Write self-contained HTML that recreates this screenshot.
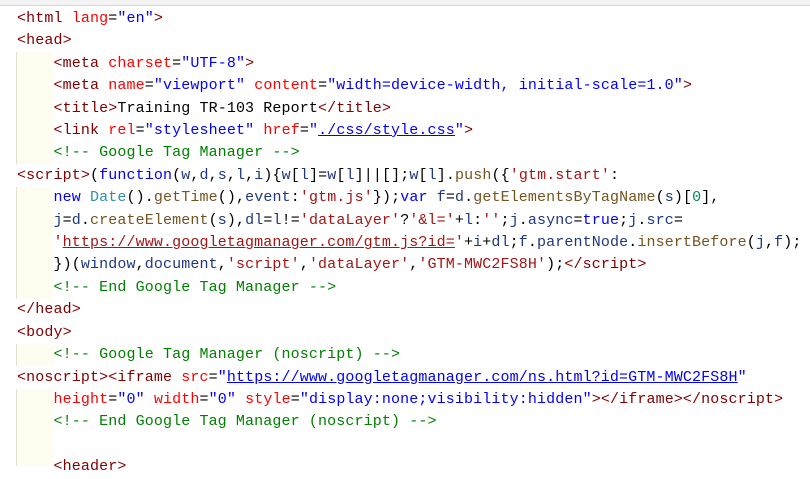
<!DOCTYPE html>
<html><head><meta charset="utf-8"><style>
body{margin:0;width:810px;height:466px;background:#fff;overflow:hidden;position:relative}
.top{position:absolute;left:0;top:0;width:810px;height:5px;background:#f3f3f3;border-bottom:1px solid #d6d6d6}
.guide{position:absolute;left:16px;width:36px;background:#fffdf0;border-left:1px solid #e0e0d0}
pre{position:absolute;left:17px;top:8px;margin:0;font-family:"Liberation Mono",monospace;font-size:15px;line-height:22.4px;color:#000;letter-spacing:0.12px}
.t{color:#800000}.a{color:#ff0000}.v{color:#0000ff}.c{color:#008000}.k{color:#0000ff}.s{color:#a31515}.i{color:#1f377f}.m{color:#74531f}.ty{color:#2b91af}.n{color:#098658}.u{text-decoration:underline}
</style></head><body>
<div class="top"></div>
<div class="guide" style="top:52px;height:112px"></div>
<div class="guide" style="top:187px;height:112px"></div>
<div class="guide" style="top:344px;height:22px"></div>
<div class="guide" style="top:389px;height:77px"></div>
<pre><span class="t">&lt;html</span> <span class="a">lang</span>=<span class="v">"en"</span><span class="t">&gt;</span>
<span class="t">&lt;head&gt;</span>
    <span class="t">&lt;meta</span> <span class="a">charset</span>=<span class="v">"UTF-8"</span><span class="t">&gt;</span>
    <span class="t">&lt;meta</span> <span class="a">name</span>=<span class="v">"viewport"</span> <span class="a">content</span>=<span class="v">"width=device-width, initial-scale=1.0"</span><span class="t">&gt;</span>
    <span class="t">&lt;title&gt;</span>Training TR-103 Report<span class="t">&lt;/title&gt;</span>
    <span class="t">&lt;link</span> <span class="a">rel</span>=<span class="v">"stylesheet"</span> <span class="a">href</span>=<span class="v">"<span class="u">./css/style.css</span>"</span><span class="t">&gt;</span>
    <span class="c">&lt;!-- Google Tag Manager --&gt;</span>
<span class="t">&lt;script&gt;</span>(<span class="k">function</span>(<span class="i">w</span>,<span class="i">d</span>,<span class="i">s</span>,<span class="i">l</span>,<span class="i">i</span>){<span class="i">w</span>[<span class="i">l</span>]=<span class="i">w</span>[<span class="i">l</span>]||[];<span class="i">w</span>[<span class="i">l</span>].<span class="m">push</span>({<span class="s">'gtm.start'</span>:
    <span class="k">new</span> <span class="ty">Date</span>().<span class="m">getTime</span>(),<span class="i">event</span>:<span class="s">'gtm.js'</span>});<span class="k">var</span> <span class="i">f</span>=<span class="i">d</span>.<span class="m">getElementsByTagName</span>(<span class="i">s</span>)[<span class="n">0</span>],
    <span class="i">j</span>=<span class="i">d</span>.<span class="m">createElement</span>(<span class="i">s</span>),<span class="i">dl</span>=<span class="i">l</span>!=<span class="s">'dataLayer'</span>?<span class="s">'&amp;l='</span>+<span class="i">l</span>:<span class="s">''</span>;<span class="i">j</span>.<span class="i">async</span>=<span class="k">true</span>;<span class="i">j</span>.<span class="i">src</span>=
    <span class="s">'<span class="u">https://www.googletagmanager.com/gtm.js?id=</span>'</span>+<span class="i">i</span>+<span class="i">dl</span>;<span class="i">f</span>.<span class="i">parentNode</span>.<span class="m">insertBefore</span>(<span class="i">j</span>,<span class="i">f</span>);
    })(<span class="i">window</span>,<span class="i">document</span>,<span class="s">'script'</span>,<span class="s">'dataLayer'</span>,<span class="s">'GTM-MWC2FS8H'</span>);<span class="t">&lt;/script&gt;</span>
    <span class="c">&lt;!-- End Google Tag Manager --&gt;</span>
<span class="t">&lt;/head&gt;</span>
<span class="t">&lt;body&gt;</span>
    <span class="c">&lt;!-- Google Tag Manager (noscript) --&gt;</span>
<span class="t">&lt;noscript&gt;&lt;iframe</span> <span class="a">src</span>=<span class="v">"<span class="u">https://www.googletagmanager.com/ns.html?id=GTM-MWC2FS8H</span>"</span>
    <span class="a">height</span>=<span class="v">"0"</span> <span class="a">width</span>=<span class="v">"0"</span> <span class="a">style</span>=<span class="v">"display:none;visibility:hidden"</span><span class="t">&gt;&lt;/iframe&gt;&lt;/noscript&gt;</span>
    <span class="c">&lt;!-- End Google Tag Manager (noscript) --&gt;</span>

    <span class="t">&lt;header&gt;</span></pre>
</body></html>
